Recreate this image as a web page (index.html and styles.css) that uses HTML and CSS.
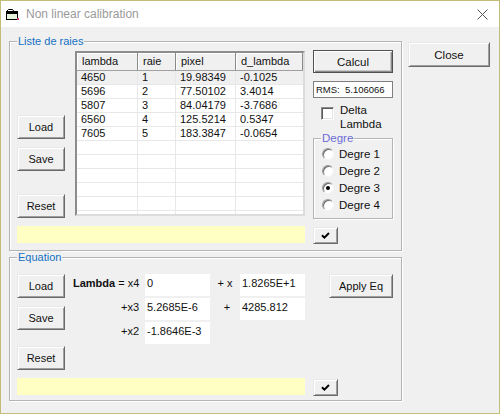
FILE: index.html
```html
<!DOCTYPE html>
<html>
<head>
<meta charset="utf-8">
<title>Non linear calibration</title>
<link rel="stylesheet" href="styles.css">
</head>
<body>
<div class="window">
  <div class="titlebar">
    <svg class="app-icon" viewBox="0 0 13 12" width="13" height="12">
      <rect x="0.5" y="2.5" width="11" height="8" fill="#e6f2dc" stroke="#000"/>
      <path d="M0.5 2.5 L2.5 0.5 H6.5 L8 2.5" fill="none" stroke="#000"/>
      <rect x="1" y="3" width="10" height="2" fill="#000"/>
      <rect x="11" y="9" width="2" height="2" fill="#c8336a"/>
    </svg>
    <span class="title">Non linear calibration</span>
    <svg class="close-x" viewBox="0 0 11 11" width="11" height="11">
      <path d="M0.5 0.5 L10.5 10.5 M10.5 0.5 L0.5 10.5" stroke="#555" stroke-width="1" fill="none"/>
    </svg>
  </div>
  <div class="client">
    <div class="groups">
      <div class="group g1">
        <div class="group-label">Liste de raies</div>
        <div class="g1-main">
          <div class="btn-col">
            <button class="btn b-load1">Load</button>
            <button class="btn b-save1">Save</button>
            <button class="btn b-reset1">Reset</button>
          </div>
          <div class="table">
            <div class="tr th">
              <div class="c c1">lambda</div><div class="c c2">raie</div><div class="c c3">pixel</div><div class="c c4">d_lambda</div>
            </div>
            <div class="tr sel">
              <div class="c c1">4650</div><div class="c c2">1</div><div class="c c3">19.98349</div><div class="c c4">-0.1025</div>
            </div>
            <div class="tr">
              <div class="c c1">5696</div><div class="c c2">2</div><div class="c c3">77.50102</div><div class="c c4">3.4014</div>
            </div>
            <div class="tr">
              <div class="c c1">5807</div><div class="c c2">3</div><div class="c c3">84.04179</div><div class="c c4">-3.7686</div>
            </div>
            <div class="tr">
              <div class="c c1">6560</div><div class="c c2">4</div><div class="c c3">125.5214</div><div class="c c4">0.5347</div>
            </div>
            <div class="tr">
              <div class="c c1">7605</div><div class="c c2">5</div><div class="c c3">183.3847</div><div class="c c4">-0.0654</div>
            </div>
            <div class="tr"><div class="c c1"></div><div class="c c2"></div><div class="c c3"></div><div class="c c4"></div></div>
            <div class="tr"><div class="c c1"></div><div class="c c2"></div><div class="c c3"></div><div class="c c4"></div></div>
            <div class="tr"><div class="c c1"></div><div class="c c2"></div><div class="c c3"></div><div class="c c4"></div></div>
            <div class="tr"><div class="c c1"></div><div class="c c2"></div><div class="c c3"></div><div class="c c4"></div></div>
            <div class="tr"><div class="c c1"></div><div class="c c2"></div><div class="c c3"></div><div class="c c4"></div></div>
            <div class="tr last"><div class="c c1"></div><div class="c c2"></div><div class="c c3"></div><div class="c c4"></div></div>
          </div>
          <div class="side">
            <button class="btn btn-default calcul">Calcul</button>
            <div class="rms">RMS:&nbsp; 5.106066</div>
            <div class="check-row">
              <span class="checkbox"></span>
              <span class="check-text">Delta Lambda</span>
            </div>
            <div class="group degre">
              <div class="group-label degre-label">Degre</div>
              <div class="radios">
                <div class="radio-row"><span class="radio"></span><span>Degre 1</span></div>
                <div class="radio-row"><span class="radio"></span><span>Degre 2</span></div>
                <div class="radio-row"><span class="radio on"><span class="dot"></span></span><span>Degre 3</span></div>
                <div class="radio-row"><span class="radio"></span><span>Degre 4</span></div>
              </div>
            </div>
          </div>
        </div>
        <div class="status-row">
          <div class="yellow"></div>
          <button class="btn check">
            <svg viewBox="0 0 9 7" width="9" height="7"><path d="M1 3.2 L3.4 5.6 L8 1" fill="none" stroke="#000" stroke-width="2"/></svg>
          </button>
        </div>
      </div>

      <div class="group g2">
        <div class="group-label">Equation</div>
        <div class="g2-main">
          <div class="btn-col">
            <button class="btn b-load2">Load</button>
            <button class="btn b-save2">Save</button>
            <button class="btn b-reset2">Reset</button>
          </div>
          <div class="eq">
            <div class="lbl"><b>Lambda</b> = x4</div>
            <div class="inp">0</div>
            <div class="op">+ x</div>
            <div class="inp">1.8265E+1</div>

            <div class="lbl">+x3</div>
            <div class="inp">5.2685E-6</div>
            <div class="op op2">+</div>
            <div class="inp">4285.812</div>

            <div class="lbl">+x2</div>
            <div class="inp">-1.8646E-3</div>
          </div>
          <button class="btn apply">Apply Eq</button>
        </div>
        <div class="status-row s2">
          <div class="yellow"></div>
          <button class="btn check">
            <svg viewBox="0 0 9 7" width="9" height="7"><path d="M1 3.2 L3.4 5.6 L8 1" fill="none" stroke="#000" stroke-width="2"/></svg>
          </button>
        </div>
      </div>
    </div>
    <button class="btn close">Close</button>
  </div>
</div>
</body>
</html>
```

FILE: styles.css
```css
* { box-sizing: border-box; }

body {
  margin: 0;
  font-family: "Liberation Sans", Arial, sans-serif;
  font-size: 11px;
  color: #111;
  background: #fff;
}

.window {
  width: 500px;
  height: 414px;
  border: 1px solid #c4bd78;
  background: #f0f0f0;
  display: flex;
  flex-direction: column;
}

.titlebar {
  flex: none;
  height: 26px;
  background: #fff;
  display: flex;
  align-items: center;
}

.app-icon {
  margin-left: 5px;
  margin-top: 1px;
  flex: none;
}

.title {
  margin-left: 7px;
  font-size: 12px;
  color: #9a9a9a;
}

.close-x {
  margin-left: auto;
  margin-right: 11px;
  margin-top: 1px;
}

.client {
  flex: 1;
  display: flex;
  align-items: flex-start;
  padding-left: 8px;
}

.groups {
  width: 393px;
  padding-top: 14px;
}

.group {
  border: 1px solid #b4b4b4;
  box-shadow: inset 1px 1px 0 #fff, 1px 1px 0 #fff;
}

.group-label {
  margin: -7px 0 0 7px;
  width: fit-content;
  padding: 0 1px;
  line-height: 12px;
  height: 12px;
  background: #f0f0f0;
  color: #1570c4;
}

.g1 { height: 210px; }

.g1-main {
  display: flex;
  align-items: flex-start;
  margin-top: 3px;
  padding-left: 7px;
}

.btn {
  font-family: inherit;
  font-size: 11px;
  color: #111;
  padding: 0;
  margin: 0;
  background: #f0f0f0;
  border: 1px solid;
  border-color: #e8e8e8 #6a6a6a #6a6a6a #e8e8e8;
  box-shadow: inset 1px 1px 0 #fff, inset -1px -1px 0 #a0a0a0;
  display: flex;
  align-items: center;
  justify-content: center;
}

.btn-col {
  width: 48px;
  display: flex;
  flex-direction: column;
  flex: none;
}

.btn-col .btn { width: 48px; height: 24px; }

.b-load1 { margin-top: 65px; }
.b-save1 { margin-top: 8px; }
.b-reset1 { margin-top: 23px; }

/* table */
.table {
  flex: none;
  margin-left: 10px;
  margin-top: 1px;
  width: 230px;
  height: 165px;
  background: #fff;
  border: 2px solid;
  border-color: #8c8c8c #dcdcdc #dcdcdc #8c8c8c;
  overflow: hidden;
}

.tr {
  display: flex;
  height: 14px;
  line-height: 13px;
  border-bottom: 1px solid #e8e8e8;
}

.tr.last { border-bottom: none; }

.tr.sel { background: #f0f0f0; }

.c {
  flex: none;
  padding-left: 4px;
  border-right: 1px solid #e8e8e8;
  white-space: nowrap;
}

.c1 { width: 61px; }
.c2 { width: 38px; }
.c3 { width: 60px; }
.c4 { width: 67px; border-right: none; }

.th {
  height: 18px;
  line-height: 17px;
  background: #f0f0f0;
  border-bottom: 1px solid #a0a0a0;
}

.th .c {
  border-right: 1px solid #8a8a8a;
  box-shadow: inset 1px 1px 0 #fff;
  padding-left: 5px;
}

/* side */
.side {
  flex: none;
  width: 80px;
  margin-left: 8px;
  display: flex;
  flex-direction: column;
}

.calcul { height: 23px; width: 80px; font-size: 11.5px; }

.btn-default {
  border: 1px solid #505050;
  box-shadow: inset 1px 1px 0 #fff, inset -1px -1px 0 #8a8a8a, inset -2px -2px 0 #c8c8c8;
}

.rms {
  margin-top: 8px;
  height: 17px;
  background: #fff;
  border: 1px solid #7f7f7f;
  font-size: 9.5px;
  line-height: 15px;
  padding-left: 2px;
}

.check-row {
  margin-top: 5px;
  display: flex;
  align-items: flex-start;
  padding-left: 8px;
}

.checkbox {
  flex: none;
  width: 13px;
  height: 13px;
  margin-top: 4px;
  background: #fff;
  border: 1px solid;
  border-color: #8a8a8a #fff #fff #8a8a8a;
  box-shadow: inset 1px 1px 0 #5a5a5a, inset -1px -1px 0 #e3e3e3;
}

.check-text {
  margin-left: 6px;
  width: 40px;
  line-height: 14px;
  font-size: 11.5px;
}

.degre {
  margin-top: 7px;
  height: 81px;
  width: 80px;
}

.degre-label {
  color: #6c6cd4;
  font-size: 11.5px;
}

.radios {
  margin-top: 1px;
  padding-left: 8px;
}

.radio-row {
  display: flex;
  align-items: center;
  height: 17px;
  font-size: 11.5px;
}

.radio {
  flex: none;
  width: 12px;
  height: 12px;
  margin-right: 5px;
  border-radius: 50%;
  background: #fff;
  border: 1px solid;
  border-color: #9a9a9a #f4f4f4 #f4f4f4 #9a9a9a;
  box-shadow: inset 1px 1px 0 #6a6a6a;
  display: flex;
  align-items: center;
  justify-content: center;
}

.dot {
  width: 4px;
  height: 4px;
  border-radius: 50%;
  background: #000;
}

/* status rows */
.status-row {
  display: flex;
  align-items: flex-start;
  margin-top: 7px;
  padding-left: 7px;
}

.yellow {
  width: 288px;
  height: 17px;
  background: #ffffc4;
}

.check {
  width: 25px;
  height: 17px;
  margin-left: 8px;
  margin-top: 1px;
}

/* equation group */
.g2 {
  margin-top: 6px;
  height: 144px;
}

.g2-main {
  display: flex;
  align-items: flex-start;
  margin-top: 11px;
  padding-left: 7px;
}

.b-load2 { margin-top: 0; }
.b-save2 { margin-top: 8px; }
.b-reset2 { margin-top: 16px; }

.eq {
  margin-left: 8px;
  display: grid;
  grid-template-columns: 72px 65px 30px 65px;
  grid-auto-rows: 22px;
  row-gap: 2px;
}

.lbl {
  text-align: right;
  padding-right: 6px;
  padding-top: 3px;
  line-height: 13px;
  white-space: nowrap;
}

.inp {
  background: #fff;
  padding: 3px 0 0 2px;
  line-height: 13px;
  white-space: nowrap;
}

.op {
  text-align: center;
  padding-top: 3px;
  line-height: 13px;
}

.op2 { padding-left: 4px; }

.apply {
  margin-left: 24px;
  width: 64px;
  height: 24px;
}

.s2 { margin-top: 8px; }

.close {
  margin-left: 6px;
  margin-top: 15px;
  width: 82px;
  height: 25px;
  font-size: 11.5px;
}
```
